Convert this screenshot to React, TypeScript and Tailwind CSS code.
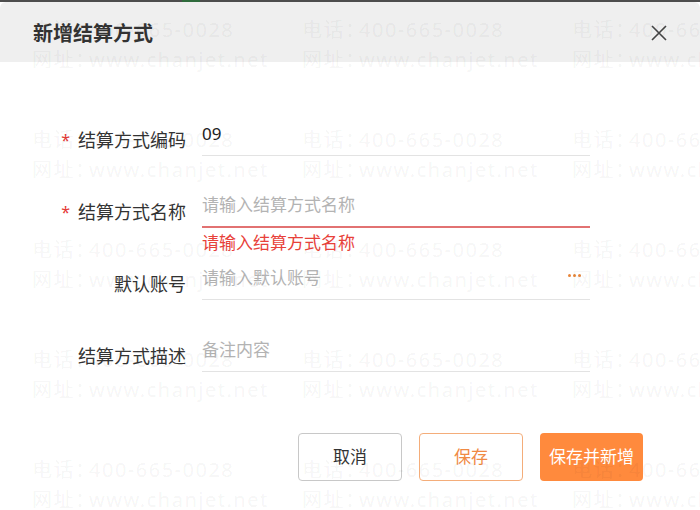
import { Fragment } from "react";

const fields = [
  { label: "结算方式编码", required: true, value: "09" },
  { label: "结算方式名称", required: true, placeholder: "请输入结算方式名称", error: "请输入结算方式名称" },
  { label: "默认账号", placeholder: "请输入默认账号", more: true },
  { label: "结算方式描述", placeholder: "备注内容" },
];

function Watermark() {
  const rows = [0, 1, 2, 3, 4];
  const cols = [0, 1, 2];
  return (
    <div className="pointer-events-none absolute inset-0 overflow-hidden">
      <div className="flex flex-col gap-[50px] pt-[15px] pl-[32px]">
        {rows.map((r) => (
          <div key={r} className="flex">
            {cols.map((c) => (
              <div
                key={c}
                className="w-[270px] shrink-0 whitespace-nowrap text-[20px] leading-[30px] tracking-[1.5px] text-black/[0.055]"
              >
                <div>
                  电话<span className="inline-block w-[14px]">：</span>400-665-0028
                </div>
                <div>
                  网址<span className="inline-block w-[14px]">：</span>www.chanjet.net
                </div>
              </div>
            ))}
          </div>
        ))}
      </div>
    </div>
  );
}

export default function App() {
  return (
    <div className="relative h-[510px] w-[700px] overflow-hidden bg-white font-['Noto_Sans','Noto_Sans_CJK_SC',sans-serif]">
      {/* top edge of the page behind */}
      <div className="flex h-[2px] bg-[#4d4d4d]">
        <div className="ml-[182px] w-[18px] bg-[#2f6b3c]" />
      </div>

      {/* Header */}
      <header className="flex h-[60px] items-center justify-between rounded-t-[6px] bg-[#efefef] pt-[4px] pl-[33px] pr-[33px]">
        <h1 className="text-[20px] font-bold text-[#333]">新增结算方式</h1>
        <svg width="16" height="16" viewBox="0 0 16 16" className="mt-[-2px]">
          <path d="M1 1 15 15M15 1 1 15" stroke="#444" strokeWidth="1.6" fill="none" />
        </svg>
      </header>

      {/* Form */}
      <div className="pt-[50px]">
        {fields.map((f) => (
          <div key={f.label} className="flex h-[72px]">
            <div className="flex h-[44px] w-[186px] items-end justify-end">
              <div className="flex h-[32px] items-center text-[18px] text-[#333]">
                {f.required && <span className="mr-[8px] text-[16px] text-[#e53935]">*</span>}
                {f.label}
              </div>
            </div>
            <div className="ml-[16px] w-[388px]">
              <div
                className={
                  f.error
                    ? "flex h-[44px] items-center border-b-2 border-[#e27272] text-[17px]"
                    : "flex h-[44px] items-center border-b border-[#e3e3e3] text-[17px]"
                }
              >
                {f.value ? (
                  <span className="text-[#222]">{f.value}</span>
                ) : (
                  <span className="text-[#b3b3b3]">{f.placeholder}</span>
                )}
                {f.more && (
                  <span className="ml-auto mr-[9px] mb-[4px] flex gap-[2px]">
                    {[0, 1, 2].map((i) => (
                      <Fragment key={i}>
                        <span className="h-[3px] w-[3px] rounded-full bg-[#e8863a]" />
                      </Fragment>
                    ))}
                  </span>
                )}
              </div>
              {f.error && (
                <div className="mt-[3px] text-[17px] leading-[24px] text-[#e8413a]">{f.error}</div>
              )}
            </div>
          </div>
        ))}
      </div>

      {/* Buttons */}
      <div className="mt-[33px] flex justify-end gap-[17px] pr-[57px]">
        <button className="h-[48px] w-[104px] rounded-[4px] border border-[#c8c8c8] bg-white text-[17px] text-[#333]">
          取消
        </button>
        <button className="h-[48px] w-[104px] rounded-[4px] border border-[#f4ad7a] bg-white text-[17px] text-[#f08a44]">
          保存
        </button>
        <button className="h-[48px] w-[103px] rounded-[4px] bg-[#ff8a3d] text-[17px] text-white">
          保存并新增
        </button>
      </div>

      <Watermark />
    </div>
  );
}
